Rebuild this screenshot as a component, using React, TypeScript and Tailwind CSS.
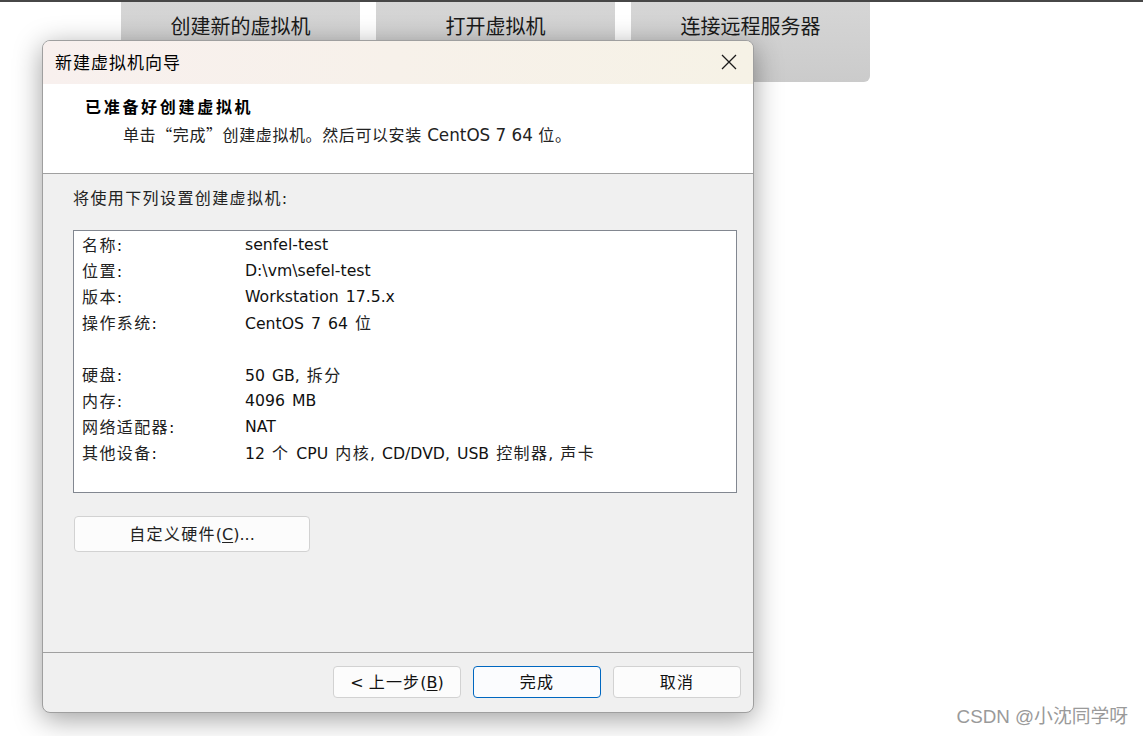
import React from "react";

const CJK_RE = /([\u3000-\u303f\u4e00-\u9fff\uff00-\uffef“”]+)/;

function T({ text, cjk = "tracking-[1.2px]", latin = "" }: { text: string; cjk?: string; latin?: string }) {
  const parts = text.split(CJK_RE).filter((p) => p.length > 0);
  return (
    <>
      {parts.map((p, i) =>
        CJK_RE.test(p) ? (
          <span key={i} className={"font-['Noto_Sans_CJK_SC',sans-serif] " + cjk}>
            {p}
          </span>
        ) : (
          <span key={i} className={latin}>
            {p}
          </span>
        )
      )}
    </>
  );
}

const rows: [string, string][] = [
  ["名称:", "senfel-test"],
  ["位置:", "D:\\vm\\sefel-test"],
  ["版本:", "Workstation 17.5.x"],
  ["操作系统:", "CentOS 7 64 位"],
  ["", ""],
  ["硬盘:", "50 GB, 拆分"],
  ["内存:", "4096 MB"],
  ["网络适配器:", "NAT"],
  ["其他设备:", "12 个 CPU 内核, CD/DVD, USB 控制器, 声卡"],
];

function BgButton({ label }: { label: string }) {
  return (
    <div className="w-[239px] h-[80px] rounded-b-[6px] bg-gradient-to-b from-[#d6d6d6] to-[#cbcbcb] flex justify-center pt-[10px] text-[20px] text-[#1a1a1a] leading-[28px] font-['Noto_Sans_CJK_SC',sans-serif]">
      {label}
    </div>
  );
}

export default function App() {
  return (
    <div className="relative w-full h-[736px] bg-white overflow-hidden font-['DejaVu_Sans','Noto_Sans_CJK_SC',sans-serif]">
      <div className="h-[2px] bg-[#474747]" />
      <div className="flex gap-[16px] pl-[121px]">
        <BgButton label="创建新的虚拟机" />
        <BgButton label="打开虚拟机" />
        <BgButton label="连接远程服务器" />
      </div>

      {/* Dialog window */}
      <div className="absolute left-[42px] top-[40px] w-[712px] h-[673px] rounded-[8px] border border-[#9f9f9f] bg-[#f0f0f0] overflow-hidden shadow-[0_6px_28px_rgba(0,0,0,0.38)] flex flex-col">
        {/* Title bar */}
        <div className="h-[43px] shrink-0 flex items-center justify-between bg-gradient-to-r from-[#f8f0ee] to-[#f6f2e6] pl-[12px] pr-[16px] pb-[2px]">
          <span className="text-[17px] text-black tracking-[1px] font-['Noto_Sans_CJK_SC',sans-serif]">新建虚拟机向导</span>
          <svg width="16" height="16" viewBox="0 0 16 16">
            <path d="M1 1 L15 15 M15 1 L1 15" stroke="#1a1a1a" strokeWidth="1.3" fill="none" />
          </svg>
        </div>
        {/* Header */}
        <div className="h-[90px] shrink-0 bg-white border-b border-[#a0a0a0] pl-[42px] pt-[11px]">
          <div className="text-[16px] font-bold text-black leading-[22px] tracking-[2.7px] font-['Noto_Sans_CJK_SC',sans-serif]">
            已准备好创建虚拟机
          </div>
          <div className="text-[16px] text-[#222] leading-[22px] mt-[6px] pl-[38px]">
            <T text="单击“完成”创建虚拟机。然后可以安装 CentOS 7 64 位。" cjk="tracking-[0.6px]" latin="text-[16.8px]" />
          </div>
        </div>
        {/* Body */}
        <div className="flex-1 flex flex-col pl-[30px] pr-[16px]">
          <div className="text-[16px] text-[#222] leading-[22px] mt-[12px]">
            <T text="将使用下列设置创建虚拟机:" cjk="tracking-[1.4px]" />
          </div>
          <div className="mt-[20px] h-[263px] bg-white border border-[#828790] pt-[1px] pl-[8px]">
            {rows.map(([k, v], i) => (
              <div key={i} className="flex h-[26px] items-center text-[16px] text-[#111]">
                <span className="w-[163px] shrink-0">
                  <T text={k} cjk="tracking-[1.4px] text-[#222]" />
                </span>
                <span className="[word-spacing:2px]">
                  <T text={v} cjk="tracking-[1.4px] text-[#222]" latin="text-[15.7px]" />
                </span>
              </div>
            ))}
          </div>
          <button className="mt-[23px] ml-[1px] w-[236px] h-[36px] rounded-[4px] border border-[#d2d2d2] bg-[#fcfcfc] text-[16px] text-[#222]">
            <T text="自定义硬件" cjk="tracking-[1.3px]" />(<span className="underline underline-offset-2">C</span>)...
          </button>
        </div>
        {/* Footer */}
        <div className="h-[60px] shrink-0 border-t border-[#a0a0a0] flex justify-end items-start pt-[13px] pr-[12px] gap-[12px]">
          <button className="w-[128px] h-[32px] rounded-[4px] border border-[#d2d2d2] bg-[#fcfcfc] text-[16px] text-[#111]">
            &lt; <T text="上一步" cjk="tracking-[1.2px]" />(<span className="underline underline-offset-2">B</span>)
          </button>
          <button className="w-[128px] h-[32px] rounded-[4px] border border-[#0067c0] bg-[#fbfcfe] text-[16px] text-[#111]">
            <T text="完成" cjk="tracking-[1.2px]" />
          </button>
          <button className="w-[128px] h-[32px] rounded-[4px] border border-[#d2d2d2] bg-[#fcfcfc] text-[16px] text-[#111]">
            <T text="取消" cjk="tracking-[1.2px]" />
          </button>
        </div>
      </div>

      <div className="absolute right-[15px] bottom-[5px] text-[18.8px] text-[#9a9a9a] font-['Liberation_Sans','Noto_Sans_CJK_SC',sans-serif]">
        CSDN @小沈同学呀
      </div>
    </div>
  );
}
